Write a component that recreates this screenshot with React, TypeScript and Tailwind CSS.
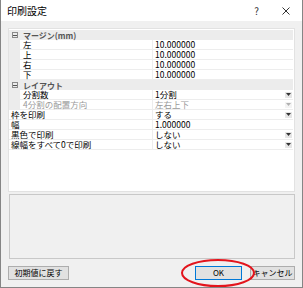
import React from 'react';

const font = { fontFamily: '"Noto Sans CJK JP", "Liberation Sans", sans-serif' };

type Row = {
  name: string;
  value: string;
  child?: boolean;
  drop?: boolean;
  disabled?: boolean;
};

function Arrow({ disabled }: { disabled?: boolean }) {
  return (
    <div className={`w-[7px] h-[6px] flex items-center justify-center ${disabled ? 'bg-[#f4f4f4]' : 'bg-[#e6e6e6]'}`}>
      <svg width="5" height="3" viewBox="0 0 5 3">
        <path d="M0 0 H5 L2.5 3 Z" fill={disabled ? '#b0b0b0' : '#333'} />
      </svg>
    </div>
  );
}

function Category({ label }: { label: string }) {
  return (
    <div className="flex items-center h-[10px] bg-[#ececec]">
      <div className="w-[11px] flex justify-center">
        <div className="w-[6px] h-[6px] border border-[#8a8a8a] flex items-center justify-center">
          <div className="w-[4px] h-px bg-[#555]" />
        </div>
      </div>
      <span className="pl-[3px] text-[8px] leading-[9px] font-semibold text-[#555]">{label}</span>
    </div>
  );
}

function PropRow({ row }: { row: Row }) {
  return (
    <div className="flex h-[10px]">
      {row.child && <div className="w-[11px] shrink-0 bg-[#ececec]" />}
      <div className={`flex flex-1 border-b border-[#ededed] text-[8.5px] ${row.disabled ? 'text-[#9a9a9a]' : 'text-black'}`}>
        <div className={`${row.child ? 'w-[133px] pl-[3px]' : 'w-[144px] pl-[2px]'} shrink-0 border-r border-[#ededed] leading-[9px] whitespace-nowrap`}>
          {row.name}
        </div>
        <div className="flex flex-1 items-center pl-[2px] pr-[1px] leading-[9px]">
          <span className="flex-1 whitespace-nowrap">{row.value}</span>
          {row.drop && <Arrow disabled={row.disabled} />}
        </div>
      </div>
    </div>
  );
}

const margins: Row[] = [
  { name: '左', value: '10.000000', child: true },
  { name: '上', value: '10.000000', child: true },
  { name: '右', value: '10.000000', child: true },
  { name: '下', value: '10.000000', child: true },
];

const layout: Row[] = [
  { name: '分割数', value: '1分割', child: true, drop: true },
  { name: '4分割の配置方向', value: '左右上下', child: true, drop: true, disabled: true },
];

const rest: Row[] = [
  { name: '枠を印刷', value: 'する', drop: true },
  { name: '幅', value: '1.000000' },
  { name: '黒色で印刷', value: 'しない', drop: true },
  { name: '線幅をすべて0で印刷', value: 'しない', drop: true },
];

export default function App() {
  return (
    <div className="relative w-[303px] h-[288px] flex flex-col border-x border-b border-[#858585] bg-[#f0f0f0] text-[9px]" style={font}>
      <div className="h-[21px] bg-white flex items-center pl-[6px] pr-[12px] text-[10px]">
        <span className="flex-1">印刷設定</span>
        <span className="mr-[23px] text-[#333]">?</span>
        <svg width="8" height="8" viewBox="0 0 8 8">
          <path d="M0.5 0.5 L7.5 7.5 M7.5 0.5 L0.5 7.5" stroke="#333" strokeWidth="1" />
        </svg>
      </div>

      <div className="flex flex-col flex-1 px-[7px] pt-[7px]">
        <div className="h-[164px] bg-white border border-[#e2e2e2] pt-px pr-px">
          <Category label="マージン(mm)" />
          {margins.map((r) => <PropRow key={r.name} row={r} />)}
          <Category label="レイアウト" />
          {layout.map((r) => <PropRow key={r.name} row={r} />)}
          {rest.map((r) => <PropRow key={r.name} row={r} />)}
        </div>

        <div className="mt-[2px] ml-px h-[65px] border border-[#c8c8c8] bg-[#f0f0f0]" />

        <div className="flex mt-[7px] h-[14px]">
          <button className="w-[61px] h-[14px] bg-[#e1e1e1] border border-[#adadad] text-[8px] leading-[12px]">初期値に戻す</button>
          <div className="flex-1" />
          <button className="w-[47px] h-[14px] bg-[#e1e1e1] border border-[#0078d7] text-[8px] leading-[12px]">OK</button>
          <button className="ml-[8px] w-[45px] h-[14px] bg-[#e1e1e1] border border-[#adadad] text-[8px] leading-[12px]">キャンセル</button>
        </div>
      </div>

      <svg className="absolute left-[179px] top-[258px]" width="76" height="30" viewBox="0 0 76 30">
        <ellipse cx="38" cy="15" rx="36" ry="13" fill="none" stroke="#e3141c" strokeWidth="2" />
      </svg>
    </div>
  );
}
